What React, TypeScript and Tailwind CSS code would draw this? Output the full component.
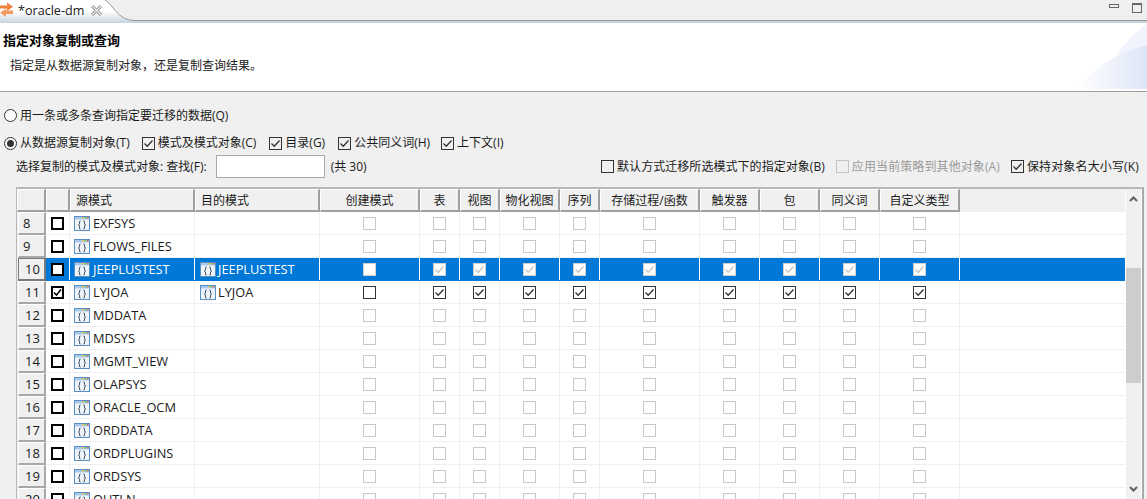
import type { ReactNode } from 'react';

const columns = [
  { label: '创建模式', width: 'w-[100px]' },
  { label: '表', width: 'w-[40px]' },
  { label: '视图', width: 'w-[40px]' },
  { label: '物化视图', width: 'w-[60px]' },
  { label: '序列', width: 'w-[40px]' },
  { label: '存储过程/函数', width: 'w-[100px]' },
  { label: '触发器', width: 'w-[60px]' },
  { label: '包', width: 'w-[60px]' },
  { label: '同义词', width: 'w-[60px]' },
  { label: '自定义类型', width: 'w-[80px]' },
];

const rows = [
  { no: 8, name: 'EXFSYS' },
  { no: 9, name: 'FLOWS_FILES' },
  { no: 10, name: 'JEEPLUSTEST', target: 'JEEPLUSTEST', selected: true },
  { no: 11, name: 'LYJOA', target: 'LYJOA', checked: true },
  { no: 12, name: 'MDDATA' },
  { no: 13, name: 'MDSYS' },
  { no: 14, name: 'MGMT_VIEW' },
  { no: 15, name: 'OLAPSYS' },
  { no: 16, name: 'ORACLE_OCM' },
  { no: 17, name: 'ORDDATA' },
  { no: 18, name: 'ORDPLUGINS' },
  { no: 19, name: 'ORDSYS' },
  { no: 20, name: 'OUTLN' },
];

function Tick({ color }: { color: string }) {
  return (
    <svg width="11" height="11" viewBox="0 0 11 11" className="block">
      <path d="M1.5 5.5 L4.2 8.2 L9.5 2.5" fill="none" stroke={color} strokeWidth="1.3" />
    </svg>
  );
}

function Check({
  checked,
  label,
  muted,
  className = '',
}: {
  checked?: boolean;
  label: string;
  muted?: boolean;
  className?: string;
}) {
  return (
    <div className={`flex items-center gap-[3px] ${muted ? 'text-[#9a9a9a]' : ''} ${className}`}>
      <span
        className={`flex h-[13px] w-[13px] items-center justify-center border bg-[#f0f0f0] ${muted ? 'border-[#c4c4c4]' : 'border-[#333]'}`}
      >
        {checked && <Tick color="#333" />}
      </span>
      {label}
    </div>
  );
}

function Radio({ on, label }: { on?: boolean; label: string }) {
  return (
    <div className="flex items-center gap-[3px]">
      <span className="flex h-[13px] w-[13px] items-center justify-center rounded-full border border-[#333] bg-white">
        {on && <span className="h-[7px] w-[7px] rounded-full bg-[#333]" />}
      </span>
      {label}
    </div>
  );
}

function SchemaIcon() {
  return (
    <svg width="16" height="15" viewBox="0 0 16 15" className="shrink-0">
      <rect x="0.5" y="0.5" width="15" height="14" fill="#eef4fa" stroke="#5a8fc4" />
      <rect x="1" y="1" width="14" height="2.5" fill="#a9c9ea" />
      <rect x="8" y="1" width="2" height="1.5" fill="#e2c84a" />
      <rect x="10.5" y="1" width="2" height="1.5" fill="#7cc36a" />
      <rect x="13" y="1" width="1.5" height="1.5" fill="#d9685a" />
      <path
        d="M6.5 5 C5 5 5.6 6.5 5.5 7.5 C5.5 8.5 4.8 8.7 4.5 9 C4.8 9.3 5.5 9.5 5.5 10.5 C5.6 11.5 5 13 6.5 13 M9.5 5 C11 5 10.4 6.5 10.5 7.5 C10.5 8.5 11.2 8.7 11.5 9 C11.2 9.3 10.5 9.5 10.5 10.5 C10.4 11.5 11 13 9.5 13"
        fill="none"
        stroke="#1f3347"
        strokeWidth="1"
      />
    </svg>
  );
}

function HeadCell({ width, children, center }: { width: string; children?: ReactNode; center?: boolean }) {
  return (
    <div
      className={`flex h-[23px] shrink-0 items-center border-t border-l border-t-white border-l-white border-r-2 border-b-2 border-r-[#9f9f9f] border-b-[#9f9f9f] bg-[#f0f0f0] pt-px ${width} ${center ? 'justify-center' : 'pl-[5px]'}`}
    >
      {children}
    </div>
  );
}

function Row({ row }: { row: (typeof rows)[number] }) {
  const sel = row.selected;
  const active = sel || row.checked;
  const cellLine = sel ? 'border-r border-r-white' : 'border-r border-r-[#f0f0f0]';
  return (
    <div className="flex h-[23px]">
      <div className="flex h-[23px] w-[29px] shrink-0 bg-[#f0f0f0] pl-px">
        <div
          className={`flex h-[23px] w-[28px] items-center border-r-2 border-b-2 text-[13px] ${row.no > 9 ? 'pl-[6px]' : 'pl-[4px]'} ${sel ? 'border-t border-l border-[#7a7a7a]' : 'border-t border-l border-t-white border-l-white border-r-[#a8a8a8] border-b-[#a8a8a8]'}`}
        >
          {row.no}
        </div>
      </div>
      <div className={`flex min-w-0 flex-1 border-b ${sel ? 'border-b-[#0078d7] bg-[#0078d7] text-white' : 'border-b-[#f0f0f0] bg-white'}`}>
        <div className={`flex w-[24px] shrink-0 items-center justify-center pr-px ${cellLine}`}>
          <span className="flex h-[13px] w-[13px] items-center justify-center border-2 border-black bg-white">
            {row.checked && (
              <svg width="9" height="9" viewBox="0 0 9 9" className="block">
                <path d="M1 4.5 L3.5 7 L8 1.5" fill="none" stroke="#000" strokeWidth="1.6" />
              </svg>
            )}
          </span>
        </div>
        <div className={`flex w-[125px] shrink-0 items-center gap-[3px] pl-[4px] text-[12.8px] ${cellLine}`}>
          <SchemaIcon />
          {row.name}
        </div>
        <div className={`flex w-[125px] shrink-0 items-center gap-[2px] pl-[5px] text-[12.8px] ${cellLine}`}>
          {row.target && <SchemaIcon />}
          {row.target}
        </div>
        {columns.map((col, i) => (
          <div key={col.label} className={`flex shrink-0 items-center justify-center ${col.width} ${cellLine}`}>
            <span
              className={`flex h-[13px] w-[13px] items-center justify-center border ${
                sel
                  ? 'border-[#d0d0d0] bg-white'
                  : row.checked
                    ? 'border-[#333] bg-white'
                    : 'border-[#c8c8c8] bg-white'
              }`}
            >
              {active && i > 0 && <Tick color={sel ? '#c4c4c4' : '#333'} />}
            </span>
          </div>
        ))}
      </div>
    </div>
  );
}

export default function App() {
  return (
    <div
      className="flex h-[499px] w-[1147px] flex-col overflow-hidden bg-[#f0f0f0] text-[12px] leading-none text-[#1a1a1a]"
      style={{ fontFamily: '"Open Sans", "Noto Sans CJK SC", sans-serif' }}
    >
      {/* tab strip */}
      <div className="h-[23px] shrink-0 border-b-2 border-b-[#c6d4e0] bg-[#efefef]">
        <div className="flex h-[21px] justify-between border-b border-b-[#9a9a9a]">
          <div className="relative z-10 flex h-[23px]">
            <div className="flex h-[23px] w-[104px] items-start gap-[5px] bg-gradient-to-b from-white from-50% to-[#c6d4e0] pt-[2px] text-[12.6px]">
              <svg width="13" height="15" viewBox="0 0 13 15" className="shrink-0">
                <path d="M-1 3.5 H7 V0.5 L13 4.8 L7 9 V6.5 H-1 Z" fill="#f0803c" />
                <path d="M14 8.5 H6 V6.5 L0 10.7 L6 15 V12 H14 Z" fill="#f29a62" />
              </svg>
              <span className="whitespace-nowrap pt-[3px]">*oracle-dm</span>
              <svg width="13" height="13" viewBox="0 0 13 13" className="mt-[2px] ml-[1px] shrink-0">
                <path d="M2 2 L11 11 M11 2 L2 11" stroke="#7f7f7f" strokeWidth="3" />
                <path d="M2 2 L11 11 M11 2 L2 11" stroke="#f6f6f6" strokeWidth="1.2" />
              </svg>
            </div>
            <svg width="30" height="23" viewBox="0 0 30 23" className="shrink-0">
              <defs>
                <linearGradient id="tabFill" x1="0" y1="0" x2="0" y2="1">
                  <stop offset="50%" stopColor="#fff" />
                  <stop offset="100%" stopColor="#c6d4e0" />
                </linearGradient>
              </defs>
              <path d="M0 0 H1 C9 4 13 20 30 20.5 V23 H0 Z" fill="url(#tabFill)" />
              <path d="M1 0 C9 4 13 20 30 20.5" fill="none" stroke="#9a9a9a" />
            </svg>
          </div>
          <div className="flex items-start gap-[13px] pt-[3px] pr-[5px]">
            <span className="mt-px h-[4px] w-[10px] border border-[#666]" />
            <span className="h-[10px] w-[10px] border border-t-2 border-[#666]" />
          </div>
        </div>
      </div>

      {/* banner */}
      <div className="relative h-[69px] shrink-0 border-b border-b-[#a0a0a0] bg-white">
        <svg width="70" height="66" viewBox="0 0 70 66" className="absolute top-0 right-0">
          <defs>
            <linearGradient id="swoosh" x1="0" y1="0" x2="1" y2="0">
              <stop offset="0%" stopColor="#ffffff" />
              <stop offset="100%" stopColor="#dde5f7" />
            </linearGradient>
          </defs>
          <path d="M22 66 C32 40 50 14 70 1 V66 Z" fill="#f1f4fc" />
          <path d="M0 66 C14 46 40 30 70 22 V66 Z" fill="url(#swoosh)" />
        </svg>
        <p className="relative pt-[11px] pl-[3px] text-[13px] font-bold text-black">指定对象复制或查询</p>
        <p className="relative pt-[13px] pl-[10px] text-[#222]">指定是从数据源复制对象，还是复制查询结果。</p>
      </div>

      {/* options */}
      <div className="flex h-[43px] shrink-0 items-end pl-[4px]">
        <div className="pb-[13px]">
          <Radio label="用一条或多条查询指定要迁移的数据(Q)" />
        </div>
      </div>
      <div className="flex h-[16px] shrink-0 items-center gap-[12px] pl-[4px]">
        <Radio on label="从数据源复制对象(T)" />
        <Check checked label="模式及模式对象(C)" className="mr-[1px]" />
        <Check checked label="目录(G)" className="mr-[1px]" />
        <Check checked label="公共同义词(H)" className="-mr-[1px]" />
        <Check checked label="上下文(I)" />
      </div>
      <div className="flex h-[27px] shrink-0 items-center pt-[4px] pr-[8px] pl-[16px]">
        <span>选择复制的模式及模式对象: 查找(F):</span>
        <span className="ml-[9px] h-[23px] w-[109px] border border-[#a8a8a8] bg-white" />
        <span className="ml-[6px]">(共 30)</span>
        <div className="ml-auto flex items-center gap-[11px]">
          <Check label="默认方式迁移所选模式下的指定对象(B)" className="tracking-[0.05px]" />
          <Check muted label="应用当前策略到其他对象(A)" className="tracking-[0.1px]" />
          <Check checked label="保持对象名大小写(K)" className="tracking-[0.15px]" />
        </div>
      </div>

      {/* schema table */}
      <div className="mt-[9px] ml-[16px] flex w-[1128px] min-h-0 flex-1 border-t-2 border-r-2 border-l border-t-[#b8b8b8] border-r-[#a8a8a8] border-l-[#b8b8b8] bg-white">
        <div className="min-w-0 flex-1 overflow-hidden">
          <div className="flex h-[23px] bg-[#f0f0f0]">
            <HeadCell width="w-[29px]" />
            <HeadCell width="w-[24px]" />
            <HeadCell width="w-[125px]">源模式</HeadCell>
            <HeadCell width="w-[125px]">目的模式</HeadCell>
            {columns.map((col) => (
              <HeadCell key={col.label} width={col.width} center>
                {col.label}
              </HeadCell>
            ))}
          </div>
          {rows.map((row) => (
            <Row key={row.no} row={row} />
          ))}
        </div>
        <div className="mr-[1px] ml-[1px] flex w-[15px] shrink-0 flex-col items-center bg-[#f0f0f0]">
          <svg width="9" height="6" viewBox="0 0 9 6" className="mt-[7px] shrink-0">
            <path d="M1 5 L4.5 1.5 L8 5" fill="none" stroke="#606060" strokeWidth="2" />
          </svg>
          <div className="mt-[66px] h-[115px] w-full shrink-0 bg-[#cdcdcd]" />
          <svg width="9" height="6" viewBox="0 0 9 6" className="mt-[103px] shrink-0">
            <path d="M1 1 L4.5 4.5 L8 1" fill="none" stroke="#606060" strokeWidth="2" />
          </svg>
        </div>
      </div>
    </div>
  );
}
